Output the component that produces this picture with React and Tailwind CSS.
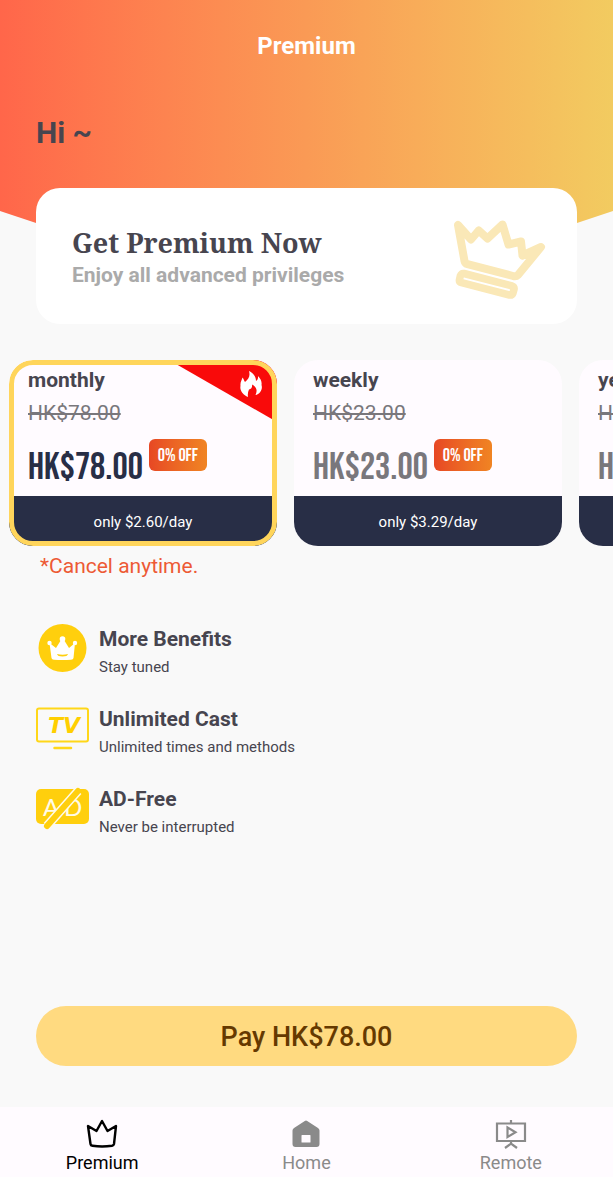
import { useState } from "react";

const plans = [
  { id: "monthly", price: "HK$78.00", off: "0% OFF", daily: "only $2.60/day", hot: true },
  { id: "weekly", price: "HK$23.00", off: "0% OFF", daily: "only $3.29/day" },
  { id: "yearly", price: "HK$398.00", off: "0% OFF", daily: "only $1.09/day" },
];

function TiltedCrown() {
  return (
    <svg viewBox="0 -2 94 86" className="h-[86px] w-[94px] shrink-0" fill="none" stroke="#fae8b7" strokeLinecap="round" strokeLinejoin="round" aria-hidden="true">
      <path strokeWidth="8" d="M6 9 L12.500 45 Q13 47.500 15.500 48.200 L61 60 Q64 61 66 59 L89 31 L70.500 39.500 L69 25.500 L56.500 28.500 L50.500 8.500 L35.500 22.500 L26.700 14.500 L19 23.500 Z" />
      <path strokeWidth="7.500" d="M12 57.500 L60 70 Q62.500 71 62 73.500 L61 77 Q60 79.500 57.500 79 L9.500 66.700 Q7 66 7.500 63.500 L8.300 60 Q9.500 57 12 57.500 Z" />
    </svg>
  );
}

function Flame() {
  return (
    <svg viewBox="0 0 24 28" className="h-7 w-6" fill="#fff" aria-hidden="true">
      <path d="M10 1 C14 3 17 6 17 11 C18.500 10 19.300 8.500 19 6 C22 9 23 12 22.500 15 C24 19 21 24 16.500 25 C18.500 21 18 17 13 14.500 C13.500 17 12.500 19 10 19.500 C9 22 8.500 24 9 27 C4 25 0.500 20 1.500 16 C1 12 3 10 3.500 7.500 C5 9 5 11 6 12 C9.500 9 11.500 6 10 1 Z" />
    </svg>
  );
}

function BenefitIcon() {
  return (
    <svg viewBox="0 0 53 50" className="h-[50px] w-[53px]" aria-hidden="true">
      <circle cx="26.500" cy="25" r="24" fill="#ffcf0d" />
      <g fill="#fff">
        <circle cx="26.500" cy="16" r="2.800" />
        <circle cx="13.500" cy="20" r="2.200" />
        <circle cx="39" cy="20" r="2.200" />
        <path d="M13.500 20 L20 25 L25 17 H28 L33 25 L39 20 L37.500 35 Q37.300 36.500 35 36.700 Q26.500 37.500 18 36.700 Q15.700 36.500 15.500 35 Z" />
      </g>
      <path d="M21 31 Q26.500 32.500 32 31 Q31.500 33.500 26.500 33.500 Q21.500 33.500 21 31 Z" fill="#ffcf0d" />
    </svg>
  );
}

function TvIcon() {
  return (
    <svg viewBox="0 0 53 50" className="h-[50px] w-[53px]" aria-hidden="true">
      <rect x="1" y="5.500" width="51" height="33" rx="2" fill="none" stroke="#ffd719" strokeWidth="2" />
      <path d="M18.500 45 H35" stroke="#ffd719" strokeWidth="2.500" strokeLinecap="round" />
      <text x="28" y="30" textAnchor="middle" fill="#ffcf00" fontFamily="DejaVu Sans, sans-serif" fontSize="22" fontWeight="700" fontStyle="italic">TV</text>
    </svg>
  );
}

function AdIcon() {
  return (
    <svg viewBox="0 0 53 50" className="h-[50px] w-[53px]" aria-hidden="true">
      <rect x="0" y="6" width="53" height="35" rx="5" fill="#ffcf0d" />
      <text x="7" y="33" fill="#fffbe8" fontFamily="Lato, sans-serif" fontSize="24">A</text>
      <text x="28" y="33" fill="#fffbe8" fontFamily="Lato, sans-serif" fontSize="24">D</text>
      <path d="M11 43 L42 8" stroke="#fffbe8" strokeWidth="9" />
      <path d="M11 43 L42 8" stroke="#ffcf0d" strokeWidth="6" strokeLinecap="round" />
    </svg>
  );
}

function CrownNavIcon() {
  return (
    <svg viewBox="0 0 32 32" className="size-8" fill="none" stroke="currentColor" strokeWidth="2.400" strokeLinejoin="round" strokeLinecap="round" aria-hidden="true">
      <path d="M2 8 L4.500 26 Q4.700 27.500 6.500 27.800 Q16 29.300 26 27.800 Q27.700 27.500 28 26 L30 8 L21.500 13 L16 3 L10.500 13 Z" />
    </svg>
  );
}

function HomeNavIcon() {
  return (
    <svg viewBox="0 0 32 32" className="size-8" aria-hidden="true">
      <path fillRule="evenodd" fill="currentColor" d="M14.800 3 Q16 2.200 17.200 3 L28 10 Q29.500 11 29.500 12.500 V26 Q29.500 29 26.500 29 H5.500 Q2.500 29 2.500 26 V12.500 Q2.500 11 4 10 Z M12 17 Q11.500 17 11.500 17.500 V24 Q11.500 24.500 12 24.500 H20 Q20.500 24.500 20.500 24 V17.500 Q20.500 17 20 17 Z" />
    </svg>
  );
}

function RemoteNavIcon() {
  return (
    <svg viewBox="0 0 32 32" className="size-8" fill="none" stroke="currentColor" strokeWidth="2.200" aria-hidden="true">
      <path d="M16 2 V5 M2 5.500 H30 V23 H2 Z M16 23 V26 M10 30 L16 25.500 L22 30 M12.500 9.500 L20.500 14.300 L12.500 19 Z" />
    </svg>
  );
}

const features = [
  { title: "More Benefits", text: "Stay tuned", Icon: BenefitIcon },
  { title: "Unlimited Cast", text: "Unlimited times and methods", Icon: TvIcon },
  { title: "AD-Free", text: "Never be interrupted", Icon: AdIcon },
];

const tabs = [
  { label: "Premium", Icon: CrownNavIcon, active: true },
  { label: "Home", Icon: HomeNavIcon },
  { label: "Remote", Icon: RemoteNavIcon },
];

function PlanCard({ plan, selected, onSelect }) {
  return (
    <button
      type="button"
      aria-pressed={selected}
      onClick={onSelect}
      className="relative flex w-[268px] shrink-0 flex-col overflow-hidden rounded-3xl bg-[#fffbff] text-left"
    >
      {plan.hot && (
        <span className="absolute top-0 right-0 flex h-[62px] w-[108px] justify-end bg-[#f90a0a] pt-2.5 pr-3.5 [clip-path:polygon(0_0,100%_0,100%_100%)]">
          <Flame />
        </span>
      )}
      <span className="flex flex-col px-[19px] pt-1.5">
        <span className="text-[21px] leading-7 font-bold text-[#47454f]">{plan.id}</span>
        <s className="text-[21px] leading-[38px] text-[#79777c]">{plan.price}</s>
        <span className="flex items-start gap-1.5 pt-[7px] font-['Bebas_Neue','Roboto_Condensed','Liberation_Sans_Narrow',sans-serif]">
          <span className={selected ? "text-[38px] leading-[57px] text-[#282e46]" : "text-[38px] leading-[57px] text-[#79777c]"}>{plan.price}</span>
          <span className="flex h-8 w-[58px] items-center justify-center rounded-md bg-linear-to-r from-[#e74724] to-[#f08423] pt-0.5 text-lg whitespace-nowrap text-white">{plan.off}</span>
        </span>
      </span>
      <span className="bg-[#282e46] pt-0.5 text-center text-[15px] leading-[48px] text-white">{plan.daily}</span>
      {selected && <span className="absolute inset-0 rounded-3xl border-[5px] border-[#ffd55b]" />}
    </button>
  );
}

export default function App() {
  const [selected, setSelected] = useState("monthly");
  const current = plans.find((plan) => plan.id === selected);

  return (
    <div className="flex min-h-screen flex-col bg-[#f9f9f9] font-[Roboto,sans-serif] text-[#47454f]">
      <header className="grid">
        <div className="col-start-1 row-start-1 bg-linear-to-r from-[#ff664a] via-[#fa9a55] to-[#f2cb60] [clip-path:polygon(0_0,100%_0,100%_211px,50%_313px,0_211px)]" />
        <div className="relative col-start-1 row-start-1 flex flex-col px-9">
          <h1 className="pt-7 text-center text-2xl leading-9 font-bold text-white">Premium</h1>
          <p className="pt-[49px] text-[30px] leading-10 font-bold">Hi ~</p>
          <section className="mt-[35px] flex h-[136px] items-center justify-between rounded-3xl bg-white pt-0.5 pr-[31px] pl-9">
            <div>
              <h2 className="font-['Noto_Serif','DejaVu_Serif_Condensed','Liberation_Serif',serif] text-[27px] leading-9 font-bold">Get Premium Now</h2>
              <p className="text-[21px] leading-7 font-bold text-[#aaaaaa]">Enjoy all advanced privileges</p>
            </div>
            <TiltedCrown />
          </section>
        </div>
      </header>

      <main className="flex flex-1 flex-col">
        <div className="flex gap-[17px] overflow-x-auto pt-9 pl-[9px] [scrollbar-width:none]">
          {plans.map((plan) => (
            <PlanCard key={plan.id} plan={plan} selected={plan.id === selected} onSelect={() => setSelected(plan.id)} />
          ))}
        </div>
        <p className="px-10 pt-1 text-[21px] leading-8 text-[#ed5a35]">*Cancel anytime.</p>

        <ul className="flex flex-col gap-6 px-9 pt-[41px]">
          {features.map(({ title, text, Icon }) => (
            <li key={title} className="flex gap-2.5">
              <Icon />
              <div>
                <h3 className="text-[21px] leading-8 font-bold">{title}</h3>
                <p className="text-[15px] leading-6">{text}</p>
              </div>
            </li>
          ))}
        </ul>

        <div className="mt-auto px-9 pt-10 pb-[41px]">
          <button type="button" className="h-[60px] w-full rounded-full bg-[#ffda80] pt-0.5 text-[27px] font-medium text-[#653900]">
            Pay {current.price}
          </button>
        </div>
      </main>

      <nav className="grid grid-cols-3 bg-[#fffbff] pt-[11px] pb-px">
        {tabs.map(({ label, Icon, active }) => (
          <a key={label} href={"#" + label.toLowerCase()} aria-current={active ? "page" : undefined} className={active ? "flex flex-col items-center text-black" : "flex flex-col items-center text-[#8a8a8a]"}>
            <Icon />
            <span className="text-lg leading-[26px]">{label}</span>
          </a>
        ))}
      </nav>
    </div>
  );
}
